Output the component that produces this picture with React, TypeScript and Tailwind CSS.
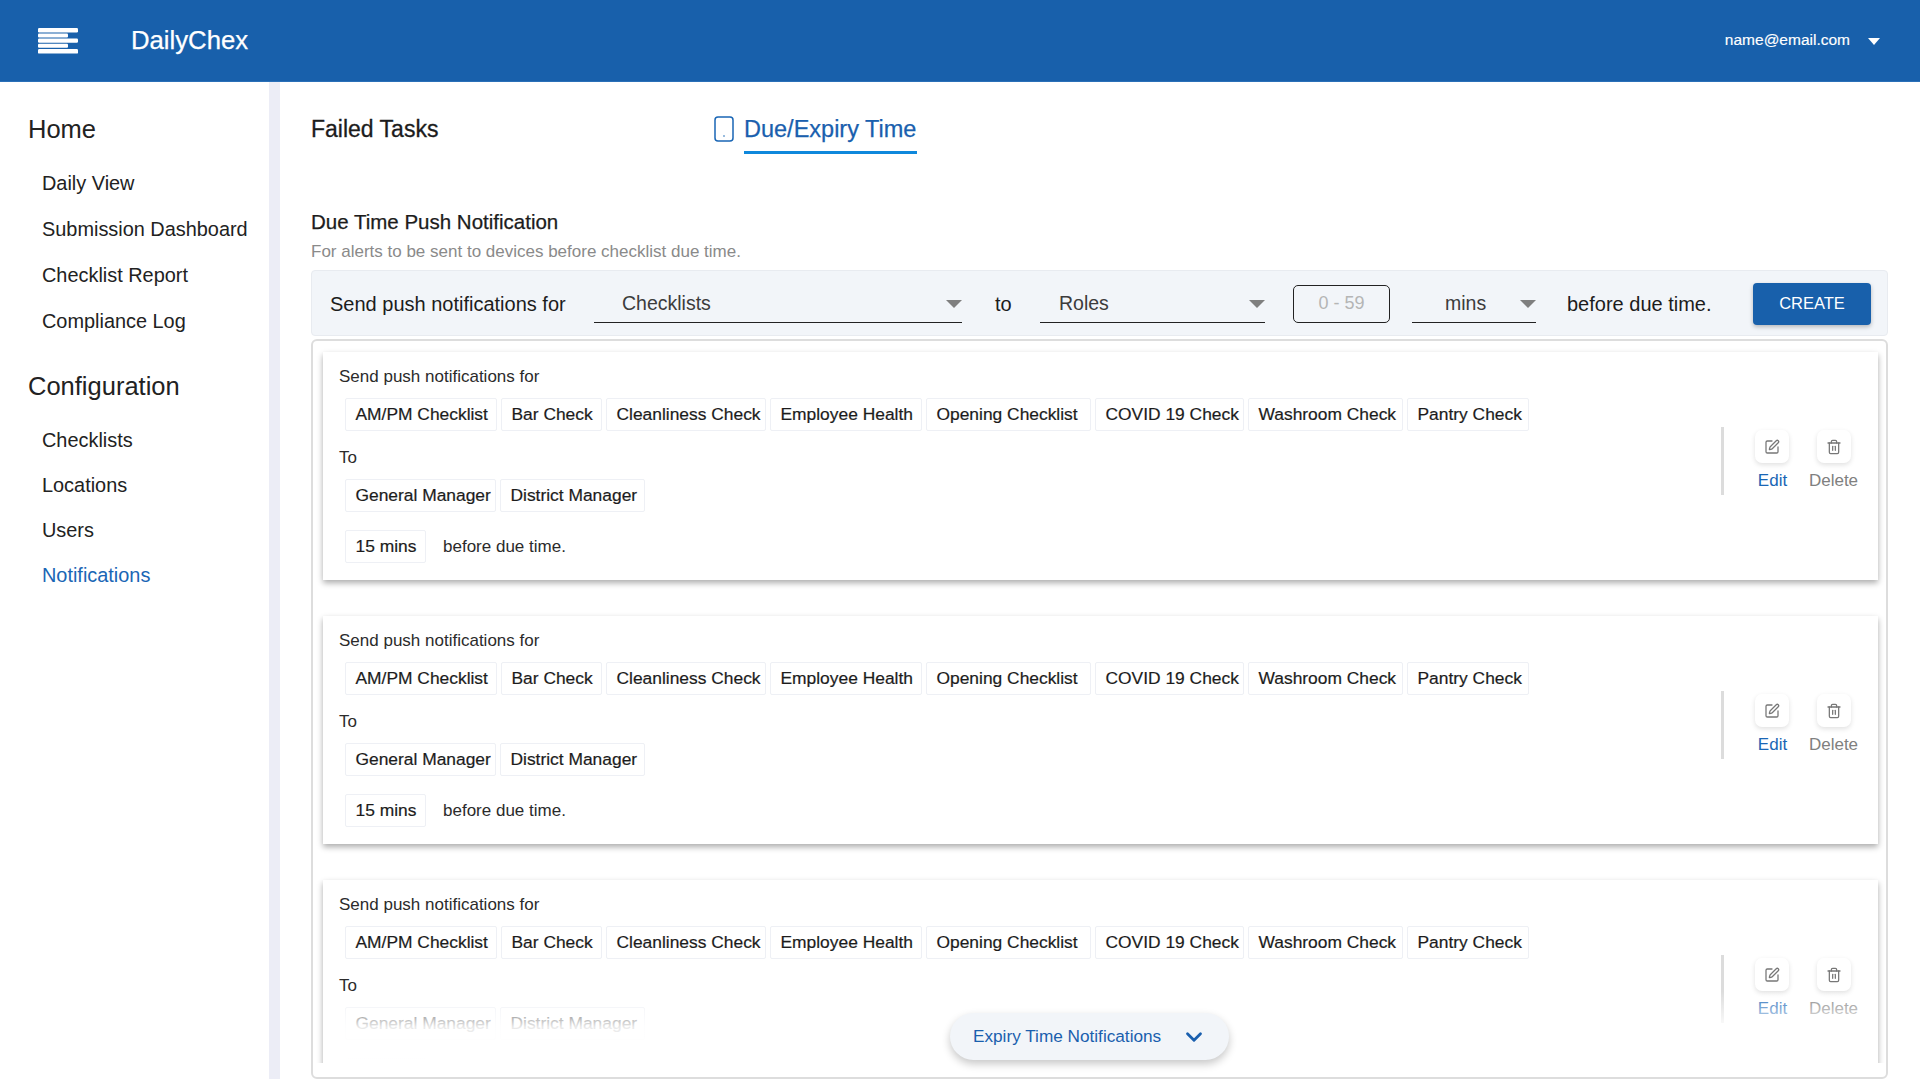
import { ChevronDown, SquarePen, Trash2 } from "lucide-react";

const homeLinks = ["Daily View", "Submission Dashboard", "Checklist Report", "Compliance Log"];
const configLinks = ["Checklists", "Locations", "Users", "Notifications"];
const checklists = [
  { label: "AM/PM Checklist", width: "w-[152px]" },
  { label: "Bar Check", width: "w-[101px]" },
  { label: "Cleanliness Check", width: "w-[160px]" },
  { label: "Employee Health", width: "w-[152px]" },
  { label: "Opening Checklist", width: "w-[165px]" },
  { label: "COVID 19 Check", width: "w-[149px]" },
  { label: "Washroom Check", width: "w-[155px]" },
  { label: "Pantry Check", width: "w-[122px]" },
];
const roles = [
  { label: "General Manager", width: "w-[151px]" },
  { label: "District Manager", width: "w-[145px]" },
];

function Arrow() {
  return (
    <svg width="16" height="8" viewBox="0 0 16 8" className="shrink-0">
      <path d="M0 0h16L8 8z" fill="#7f7f7f" />
    </svg>
  );
}

function Select({ label, width, textLeft }: { label: string; width: string; textLeft: string }) {
  return (
    <div className={`${width} ${textLeft} h-[38px] pt-[2px] flex items-center justify-between border-b-[1.5px] border-[#222] shrink-0`}>
      <span className="text-[19.5px] text-[#3c3c3c]">{label}</span>
      <Arrow />
    </div>
  );
}

function Chip({ label, width }: { label: string; width: string }) {
  return (
    <span className={`${width} h-[33px] shrink-0 flex items-center pl-[9.5px] bg-white border border-[#eef0f5] rounded-[2px] text-[17.4px] text-[#1c1c1c] [-webkit-text-stroke:0.2px] whitespace-nowrap`}>
      {label}
    </span>
  );
}

function NotificationCard() {
  return (
    <div className="shrink-0 h-[228px] flex items-center bg-white shadow-[0_3px_6px_rgba(0,0,0,0.33)]">
      <div className="flex-1 h-full pt-[14px] pl-[16px]">
        <p className="text-[17px] leading-[22px] text-[#2b2b2b]">Send push notifications for</p>
        <div className="mt-[10px] ml-[6px] flex gap-[4px]">
          {checklists.map((c) => <Chip key={c.label} label={c.label} width={c.width} />)}
        </div>
        <p className="mt-[16px] text-[17px] leading-[22px] text-[#2b2b2b]">To</p>
        <div className="mt-[10px] ml-[6px] flex gap-[4px]">
          {roles.map((r) => <Chip key={r.label} label={r.label} width={r.width} />)}
        </div>
        <div className="mt-[18px] ml-[6px] flex items-center gap-[17px]">
          <Chip label="15 mins" width="w-[81px]" />
          <span className="text-[17px] text-[#2b2b2b]">before due time.</span>
        </div>
      </div>
      <div className="flex items-start -mt-[10px] pr-[13px]">
        <div className="w-[3px] h-[68px] bg-[#dcdcdc] mr-[17px]" />
        <div className="w-[62px] pt-[3px] flex flex-col items-center">
          <div className="w-[34px] h-[33px] rounded-[7px] bg-white shadow-[0_2px_5px_rgba(0,0,0,0.12)] flex items-center justify-center">
            <SquarePen size={16} color="#777" strokeWidth={1.9} />
          </div>
          <span className="mt-[8px] ml-[1px] text-[17px] leading-[20px] text-[#1a66b5]">Edit</span>
        </div>
        <div className="w-[62px] pt-[3px] flex flex-col items-center">
          <div className="w-[34px] h-[33px] rounded-[7px] bg-white shadow-[0_2px_5px_rgba(0,0,0,0.12)] flex items-center justify-center">
            <Trash2 size={16} color="#777" strokeWidth={1.9} />
          </div>
          <span className="mt-[8px] -ml-[1px] text-[17px] leading-[20px] text-[#808080]">Delete</span>
        </div>
      </div>
    </div>
  );
}

export default function App() {
  return (
    <div className="h-screen flex flex-col overflow-hidden bg-white font-['Liberation_Sans',Arial,sans-serif]">
      <header className="h-[82px] shrink-0 flex items-center pl-[38px] pr-[40px] bg-[#1860ab] border-b border-[#2a70b8] text-white">
        <svg width="40" height="26" viewBox="0 0 40 26" className="shrink-0">
          <rect x="0" y="0" width="40" height="4.4" rx="1.2" fill="#fff" />
          <rect x="0" y="5.4" width="30" height="4" rx="1" fill="#fff" />
          <rect x="0" y="10.4" width="40" height="4.4" rx="1.2" fill="#fff" />
          <rect x="0" y="15.8" width="30" height="4" rx="1" fill="#fff" />
          <rect x="0" y="21" width="40" height="4.6" rx="1.2" fill="#fff" />
        </svg>
        <span className="ml-[53px] text-[25.7px] [-webkit-text-stroke:0.25px]">DailyChex</span>
        <span className="ml-auto -mt-[1px] text-[15.5px] [-webkit-text-stroke:0.15px]">name@email.com</span>
        <svg width="12" height="7" viewBox="0 0 12 7" className="ml-[18px] mt-[2px]">
          <path d="M0 0h12L6 7z" fill="#fff" />
        </svg>
      </header>

      <div className="flex-1 min-h-0 flex">
        <aside className="w-[280px] shrink-0 border-r-[11px] border-[#ecedf6] pt-[32px] pl-[28px] text-[#222]">
          <h2 className="text-[25.5px] leading-[30px]">Home</h2>
          <nav className="mt-[17px] pl-[14px]">
            {homeLinks.map((l) => (
              <div key={l} className="h-[46px] flex items-center text-[19.9px]">{l}</div>
            ))}
          </nav>
          <h2 className="mt-[26px] text-[25.5px] leading-[30px]">Configuration</h2>
          <nav className="mt-[17px] pl-[14px]">
            {configLinks.map((l) => (
              <div key={l} className={`h-[45px] flex items-center text-[19.9px] ${l === "Notifications" ? "text-[#1a66b5]" : ""}`}>{l}</div>
            ))}
          </nav>
        </aside>

        <main className="flex-1 min-w-0 flex flex-col pl-[31px] pr-[32px] pt-[32px]">
          <div className="flex items-start shrink-0">
            <span className="w-[403px] text-[23px] leading-[30px] text-[#1c1c1c] [-webkit-text-stroke:0.3px]">Failed Tasks</span>
            <svg width="20" height="26" viewBox="0 0 20 26" className="mt-[2px] shrink-0">
              <rect x="1" y="1" width="18" height="24" rx="3" fill="none" stroke="#1a66b5" strokeWidth="1.5" />
              <circle cx="10" cy="20" r="0.8" fill="#1a66b5" />
            </svg>
            <div className="ml-[10px] w-[173px] pb-[7px] border-b-[3px] border-[#0e88dc] text-[23.5px] leading-[30px] text-[#1a5fae] [-webkit-text-stroke:0.25px] whitespace-nowrap">
              Due/Expiry Time
            </div>
          </div>

          <h3 className="mt-[56px] text-[20.5px] leading-[24px] text-[#1c1c1c] [-webkit-text-stroke:0.25px]">Due Time Push Notification</h3>
          <p className="mt-[7px] text-[17px] leading-[22px] text-[#8a8a8a]">For alerts to be sent to devices before checklist due time.</p>

          <div className="mt-[7px] h-[66px] pt-[1px] shrink-0 flex items-center pl-[18px] bg-[#f2f5f9] border border-[#e8ebf0] rounded-[4px] text-[#1c1c1c]">
            <span className="w-[264px] shrink-0 text-[20px]">Send push notifications for</span>
            <Select label="Checklists" width="w-[368px]" textLeft="pl-[28px]" />
            <span className="ml-[33px] w-[45px] shrink-0 text-[20px]">to</span>
            <Select label="Roles" width="w-[225px]" textLeft="pl-[19px]" />
            <div className="ml-[28px] w-[97px] h-[38px] shrink-0 flex items-center justify-center border-[1.5px] border-[#222] rounded-[5px] text-[18px] text-[#b5b5b5]">
              0 - 59
            </div>
            <Select label="mins" width="ml-[22px] w-[124px]" textLeft="pl-[33px]" />
            <span className="ml-[31px] w-[186px] shrink-0 text-[20px]">before due time.</span>
            <button className="w-[118px] h-[42px] shrink-0 rounded-[4px] bg-[#1860ab] text-white text-[16.5px] shadow-[0_2px_4px_rgba(0,0,0,0.25)]">
              CREATE
            </button>
          </div>

          <div className="relative mt-[3px] flex-1 min-h-0 flex flex-col border-2 border-[#dddddd] rounded-[6px]">
            <div className="relative mb-[14px] flex-1 min-h-0 overflow-hidden pt-[11px] pl-[10px] pr-[8px] flex flex-col gap-[36px]">
              <NotificationCard />
              <NotificationCard />
              <NotificationCard />
              <div className="absolute left-[10px] right-[8px] bottom-0 h-[72px] bg-linear-to-b from-transparent via-white/90 to-white" />
            </div>
            <div className="absolute left-[637px] bottom-[17px] w-[279px] h-[47px] pl-[23px] flex items-center rounded-full bg-[#f2f5f9] shadow-[0_4px_8px_rgba(0,0,0,0.22)] text-[17.2px] text-[#1a5fae]">
              Expiry Time Notifications
              <ChevronDown size={26} color="#1a5fae" strokeWidth={2.6} className="ml-[20px]" />
            </div>
          </div>
        </main>
      </div>
    </div>
  );
}
